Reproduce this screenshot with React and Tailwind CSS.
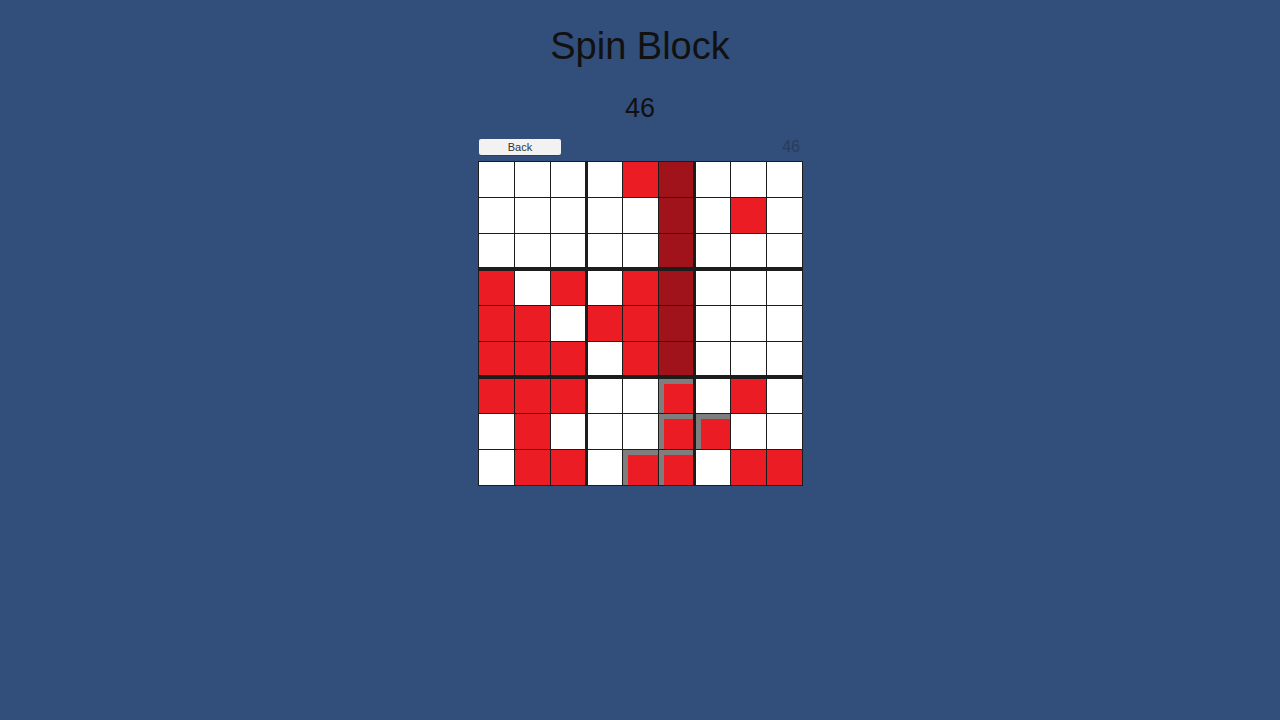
const BOARD = [
  "WWWWRDWWW",
  "WWWWWDWRW",
  "WWWWWDWWW",
  "RWRWRDWWW",
  "RRWRRDWWW",
  "RRRWRDWWW",
  "RRRWWGWRW",
  "WRWWWGGWW",
  "WRRWGGWRR",
];

function Cell({ type, row, col }) {
  const top = row === 3 || row === 6 ? "border-t-2" : "border-t";
  const bottom = row === 2 || row === 5 ? "border-b-2" : "";
  const left = col === 3 || col === 6 ? "border-l-2" : "border-l";
  const right = col === 2 || col === 5 ? "border-r" : "";
  const fill =
    type === "R" ? "bg-[#ec1c24]" : type === "D" ? "bg-[#a1131a]" : type === "G" ? "bg-[#ec1c24]" : "bg-white";
  return (
    <div className={`box-border h-[36px] w-[36px] border-[#1c1c1c] ${top} ${bottom} ${left} ${right} ${fill}`}>
      {type === "G" && (
        <div className="box-border h-full w-full border-l-[5px] border-t-[5px] border-[#7e7e7e] bg-[#ec1c24]" />
      )}
    </div>
  );
}

export default function App() {
  return (
    <div
      className="flex min-h-screen flex-col items-center bg-[#324e7a] text-[#111]"
      style={{ fontFamily: '"Liberation Sans", Arial, sans-serif' }}
    >
      <h1 className="pt-[24px] text-[38px] leading-[44px]">Spin Block</h1>
      <div className="mt-[25px] text-[27px] leading-[30px]">46</div>

      <div className="mt-[16px] flex w-[324px] items-center justify-between">
        <button className="ml-[1px] h-[16px] w-[82px] rounded-[2px] bg-[#f2f2f2] text-[11px] leading-[16px] text-[#333] shadow-[0_1px_0_rgba(0,0,0,0.15)]">
          Back
        </button>
        <span className="pr-[2px] text-[16px] leading-[16px] text-[#283c5c]">46</span>
      </div>

      <div className="mt-[6px] box-content grid w-[324px] grid-cols-9 border-b border-r border-[#1c1c1c]">
        {BOARD.map((line, r) =>
          line.split("").map((t, c) => <Cell key={`${r}-${c}`} type={t} row={r} col={c} />)
        )}
      </div>
    </div>
  );
}
